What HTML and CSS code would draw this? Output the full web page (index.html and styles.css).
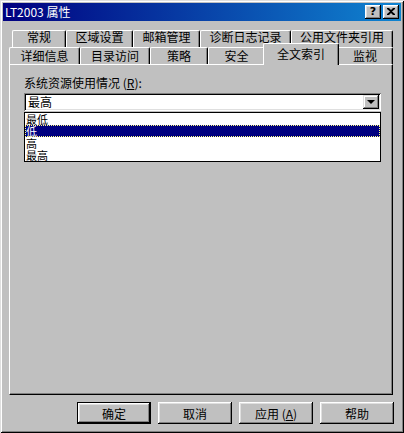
FILE: index.html
```html
<!DOCTYPE html>
<html lang="zh-CN">
<head>
    <meta charset="UTF-8">
    <meta name="viewport" content="width=device-width, initial-scale=1.0">
    <title>LT2003 属性</title>
    <link rel="stylesheet" href="styles.css">
</head>
<body>

    <div class="window">
        <!-- 标题栏 -->
        <div class="titlebar">
            <span class="title">LT2003 属性</span>
            <div class="title-buttons">
                <button class="title-btn help">?</button>
                <button class="title-btn close">
                    <svg width="8" height="7" viewBox="0 0 8 7">
                        <path d="M0 0h2l2 2 2-2h2v1L5 3.5 8 6v1H6L4 5 2 7H0V6l3-2.5L0 1z" fill="#000"/>
                    </svg>
                </button>
            </div>
        </div>

        <!-- 选项卡 -->
        <div class="tabs">
            <div class="tab-row row-back">
                <div class="tab">常规</div>
                <div class="tab">区域设置</div>
                <div class="tab">邮箱管理</div>
                <div class="tab">诊断日志记录</div>
                <div class="tab">公用文件夹引用</div>
            </div>
            <div class="tab-row row-front">
                <div class="tab">详细信息</div>
                <div class="tab">目录访问</div>
                <div class="tab">策略</div>
                <div class="tab">安全</div>
                <div class="tab active">全文索引</div>
                <div class="tab">监视</div>
            </div>
        </div>

        <!-- 选项卡内容 -->
        <div class="panel">
            <div class="label">系统资源使用情况 (<u>R</u>):</div>
            <div class="combo">
                <span class="combo-value">最高</span>
                <span class="combo-arrow"></span>
            </div>
            <ul class="listbox">
                <li>最低</li>
                <li class="selected">低</li>
                <li>高</li>
                <li>最高</li>
            </ul>
        </div>

        <!-- 按钮 -->
        <div class="buttons">
            <button class="btn default">确定</button>
            <button class="btn">取消</button>
            <button class="btn">应用 (<u>A</u>)</button>
            <button class="btn">帮助</button>
        </div>
    </div>

</body>
</html>
```
FILE: styles.css
```css
* {
    box-sizing: border-box;
}
body {
    margin: 0;
    background-color: #c0c0c0;
    font-family: "Noto Sans CJK SC", "DejaVu Sans", sans-serif;
    font-size: 12px;
    color: #000;
}
/* 窗口外框 */
.window {
    width: 404px;
    height: 433px;
    padding: 3px;
    background-color: #c0c0c0;
    display: flex;
    flex-direction: column;
    box-shadow: inset 1px 1px #dfdfdf, inset -1px -1px #000,
                inset 2px 2px #fff, inset -2px -2px #808080;
}
/* 标题栏 */
.titlebar {
    height: 18px;
    display: flex;
    align-items: center;
    padding: 0 2px;
    background: linear-gradient(to right, #000080, #1084d0);
    color: #fff;
}
.title {
    flex: 1;
    line-height: 18px;
}
.title-buttons {
    display: flex;
    gap: 2px;
}
.title-btn {
    width: 16px;
    height: 14px;
    padding: 0;
    border: none;
    background-color: #c0c0c0;
    box-shadow: inset -1px -1px #000, inset 1px 1px #fff,
                inset -2px -2px #808080, inset 2px 2px #dfdfdf;
    display: flex;
    align-items: center;
    justify-content: center;
    font-family: "DejaVu Sans", sans-serif;
    font-weight: bold;
    font-size: 11px;
    line-height: 14px;
    color: #000;
}
.title-btn svg {
    display: block;
    margin-top: -1px;
}
/* 选项卡 */
.tabs {
    margin-top: 9px;
}
.tab-row {
    display: grid;
    height: 17px;
}
.row-back {
    margin-left: 9px;
    grid-template-columns: 54px 67px 67px 91px 102px;
}
.row-front {
    margin-left: 6px;
    grid-template-columns: 71px 70px 58px 57px 72px 56px;
}
.tab {
    background-color: #c0c0c0;
    border-top: 1px solid #fff;
    border-left: 1px solid #fff;
    border-right: 1px solid #000;
    border-radius: 2px 2px 0 0;
    box-shadow: inset -1px 0 #808080;
    text-align: center;
    line-height: 15px;
    white-space: nowrap;
}
.row-back .tab {
    line-height: 12px;
}
.tab.active {
    position: relative;
    z-index: 2;
    margin: -4px -2px -1px;
    line-height: 19px;
}
/* 内容面板 */
.panel {
    margin-left: 6px;
    width: 384px;
    height: 331px;
    padding: 12px 11px 0 14px;
    border: 1px solid;
    border-color: #fff #000 #000 #fff;
    box-shadow: inset -1px -1px #808080;
}
.label {
    line-height: 12px;
}
.combo {
    margin-top: 4px;
    width: 357px;
    height: 18px;
    padding: 2px;
    display: flex;
    align-items: center;
    background-color: #fff;
    box-shadow: inset 1px 1px #808080, inset -1px -1px #fff,
                inset 2px 2px #000, inset -2px -2px #dfdfdf;
}
.combo-value {
    flex: 1;
    padding-left: 2px;
    line-height: 14px;
}
/* 下拉按钮 */
.combo-arrow {
    width: 16px;
    height: 14px;
    background-color: #c0c0c0;
    box-shadow: inset -1px -1px #000, inset 1px 1px #dfdfdf,
                inset -2px -2px #808080, inset 2px 2px #fff;
    position: relative;
}
.combo-arrow::after {
    content: "";
    position: absolute;
    left: 4px;
    top: 5px;
    border-left: 4px solid transparent;
    border-right: 4px solid transparent;
    border-top: 4px solid #000;
}
.listbox {
    list-style: none;
    margin: 1px 0 0;
    padding: 0;
    width: 357px;
    border: 1px solid #000;
    background-color: #fff;
    font-size: 11px;
}
.listbox li {
    height: 12px;
    line-height: 12px;
    padding-left: 1px;
}
.listbox li.selected {
    background-color: #000080;
    color: #fff;
    outline: 1px dotted #ffff80;
    outline-offset: -1px;
}
/* 底部按钮 */
.buttons {
    margin-top: 7px;
    padding-right: 7px;
    display: flex;
    justify-content: flex-end;
    gap: 7px;
}
.btn {
    width: 74px;
    height: 22px;
    padding: 0;
    border: none;
    background-color: #c0c0c0;
    font-family: inherit;
    font-size: 12px;
    color: #000;
    box-shadow: inset -1px -1px #000, inset 1px 1px #fff,
                inset -2px -2px #808080, inset 2px 2px #dfdfdf;
}
.btn.default {
    border: 1px solid #000;
}
```
